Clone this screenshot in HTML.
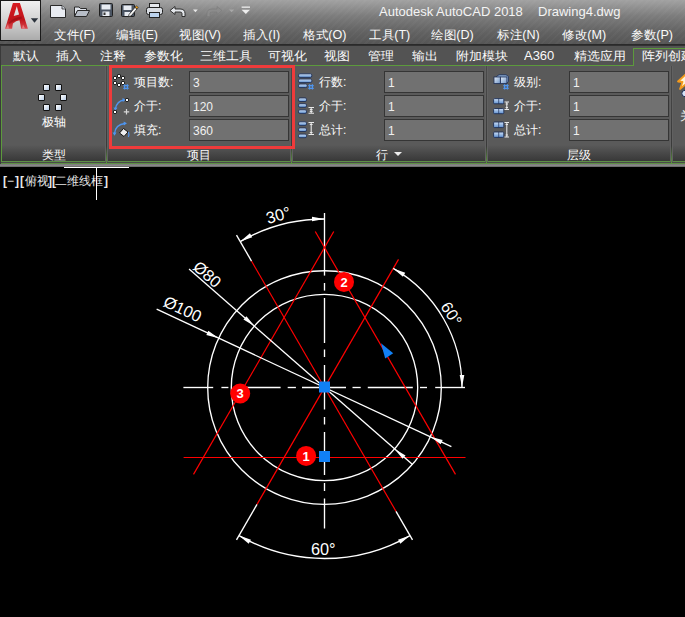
<!DOCTYPE html>
<html><head><meta charset="utf-8">
<style>
*{margin:0;padding:0;box-sizing:border-box}
html,body{width:685px;height:617px;overflow:hidden;background:#000}
body{position:relative;font-family:"Liberation Sans",sans-serif;color:#fafafa;font-size:12px}
.a{position:absolute;white-space:nowrap;line-height:1}
.mn{transform:scaleX(1.05);transform-origin:0 0}
.tb{transform:scaleX(1.08);transform-origin:0 0}
#title{position:absolute;left:0;top:0;width:685px;height:44px;
 background:repeating-linear-gradient(135deg,rgba(255,255,255,0.0) 0 3px,rgba(255,255,255,0.025) 3px 5px),linear-gradient(#a2a2a2 0px,#7c7c7c 16px,#626262 32px,#555555 44px);}
#abtn{position:absolute;left:0;top:0;width:41px;height:41px;border:1px solid #1a1a1a;background:linear-gradient(#f0f0f0,#d6d6d6 45%,#ababab)}
#sep1{position:absolute;left:0;top:44px;width:685px;height:2px;background:linear-gradient(#262626,#363636)}
#tabs{position:absolute;left:0;top:46px;width:685px;height:19px;background:#535353;border-left:1px solid #3a3a3a}
#ribbon{position:absolute;left:0;top:65px;width:685px;height:97px;background:#5b5b5b}
.panel{position:absolute;top:65px;height:98px;border-left:1px solid #6a6a6a;border-right:1px solid #6a6a6a;}
.lbar{position:absolute;top:82px;left:0;right:0;height:14px;background:linear-gradient(#5a5a5a,#3c3c3c)}
.sq{position:absolute;width:7px;height:7px;border:1px solid #111;border-radius:1px;background:linear-gradient(135deg,#fff,#b9cde6)}
.inp{position:absolute;width:100px;height:22px;background:#717171;border:1px solid #353535}
.inp span{position:absolute;left:3px;top:5px;font-size:12px;line-height:1;color:#f0f0f0}
.lab{position:absolute;font-size:12px;line-height:1;color:#fafafa;white-space:nowrap}
</style></head><body>
<div id="title"></div>
<div id="abtn"></div>
<svg class="a" style="left:0;top:0" width="44" height="44" viewBox="0 0 44 44">
<defs><linearGradient id="ag" x1="0" y1="0" x2="0" y2="1"><stop offset="0" stop-color="#d81c22"/><stop offset="0.65" stop-color="#c0141a"/><stop offset="1" stop-color="#d8484d"/></linearGradient></defs>
<path d="M12.9 3.1 H19.9 L27.9 28.8 H21.2 L19.5 20.2 Q16 20.6 12.9 23.4 L12.1 28.8 H5.1 Z M16.8 6.2 L13.7 16.1 L19.1 14.5 Z" fill="url(#ag)" fill-rule="evenodd"/>
<path d="M8.5 22.5 Q14 17.5 21.5 16.5 L22 18.5 Q15 19.5 9.5 24 Z" fill="#8e0c12" opacity="0.55"/>
<path d="M6 28.5 L8 24 L9 28.5 Z M22 28.5 L23 24.5 L25 28.5 Z" fill="#f4a0a3" opacity="0.6"/>
<path d="M30.8 18.2 L38.2 18.2 L34.5 22.8 Z" fill="#2c333d"/>
</svg>
<svg class="a" style="left:48px;top:2px" width="210" height="18" viewBox="48 2 210 18">
<!-- new -->
<path d="M50.5 5.5 H62 L65.5 9 V17.5 H50.5 Z" fill="#e9ecf2" stroke="#2a2a2a" stroke-width="1"/>
<path d="M62 5.5 V9 H65.5" fill="#cfd4dc" stroke="#2a2a2a" stroke-width="0.8"/>
<!-- open -->
<path d="M74.5 7 H79 L80.5 8.5 H86.5 V11 H77.5 L74.5 16.5 Z" fill="#dfe3ea" stroke="#2a2a2a" stroke-width="1"/>
<path d="M74.5 16.5 L77.5 10.5 H89.5 L86.5 16.5 Z" fill="#b8bec8" stroke="#2a2a2a" stroke-width="1"/>
<!-- save -->
<rect x="99.5" y="3.5" width="13" height="13" rx="1" fill="#4b5563" stroke="#1f1f1f"/>
<rect x="101.5" y="4.5" width="9" height="5" fill="#e8ecf2"/>
<rect x="102.5" y="11.5" width="7" height="4.5" fill="#e8ecf2"/>
<rect x="103.5" y="12.5" width="2" height="2.5" fill="#333"/>
<!-- save as -->
<rect x="121.5" y="4.5" width="13" height="12" rx="1" fill="#4b5563" stroke="#1f1f1f"/>
<rect x="123.5" y="5.5" width="8" height="4.5" fill="#e8ecf2"/>
<rect x="124.5" y="12" width="6" height="4" fill="#e8ecf2"/>
<path d="M129 14.5 L135 7.3 L137 9 L131 16 L128.5 16.8 Z" fill="#f4f4f4" stroke="#222" stroke-width="0.8"/><path d="M135 7.3 L136.3 5.8 L138.3 7.5 L137 9 Z" fill="#f2a31b" stroke="#222" stroke-width="0.6"/>
<!-- print -->
<rect x="149.5" y="3.5" width="10" height="5" fill="#e6e9ee" stroke="#222"/>
<rect x="146.5" y="7.5" width="16" height="7" rx="2" fill="#d9dde3" stroke="#222"/>
<rect x="149.5" y="12.5" width="10" height="5" fill="#bcd3ee" stroke="#222"/>
<!-- undo -->
<path d="M170 10.5 L175 6.5 V9 H180 Q185 9 185 13.5 V16.5 H182 V13.5 Q182 12 180 12 H175 V14.5 Z" fill="#e3e6ea" stroke="#222" stroke-width="0.9"/>
<path d="M193 9.6 H197.8 L195.4 12.3 Z" fill="#e8e8e8"/>
<!-- redo -->
<path d="M222 10.5 L217 6.5 V9 H212 Q207 9 207 13.5 V16.5 H210 V13.5 Q210 12 212 12 H217 V14.5 Z" fill="#8c8c8c" stroke="#7a7a7a" stroke-width="0.6"/>
<path d="M229 9.6 H234.3 L231.6 12.3 Z" fill="#a8a8a8"/>
<!-- customize -->
<rect x="241.6" y="6.5" width="8.4" height="1.3" fill="#eee"/>
<path d="M241.6 9.8 H250 L245.8 14 Z" fill="#eee"/>
</svg>
<div class="a" style="left:379px;top:5px;font-size:13px;color:#f4f4f4">Autodesk AutoCAD 2018</div>
<div class="a" style="left:538px;top:5px;font-size:13px;color:#f4f4f4">Drawing4.dwg</div>
<div class="a mn" style="left:54px;top:29px">文件(F)</div>
<div class="a mn" style="left:116px;top:29px">编辑(E)</div>
<div class="a mn" style="left:179px;top:29px">视图(V)</div>
<div class="a mn" style="left:243px;top:29px">插入(I)</div>
<div class="a mn" style="left:303px;top:29px">格式(O)</div>
<div class="a mn" style="left:369px;top:29px">工具(T)</div>
<div class="a mn" style="left:431px;top:29px">绘图(D)</div>
<div class="a mn" style="left:497px;top:29px">标注(N)</div>
<div class="a mn" style="left:562px;top:29px">修改(M)</div>
<div class="a mn" style="left:631px;top:29px">参数(P)</div>
<div id="sep1"></div>
<div id="tabs"></div>
<div class="a tb" style="left:13px;top:50px">默认</div>
<div class="a tb" style="left:56px;top:50px">插入</div>
<div class="a tb" style="left:100px;top:50px">注释</div>
<div class="a tb" style="left:144px;top:50px">参数化</div>
<div class="a tb" style="left:200px;top:50px">三维工具</div>
<div class="a tb" style="left:268px;top:50px">可视化</div>
<div class="a tb" style="left:324px;top:50px">视图</div>
<div class="a tb" style="left:368px;top:50px">管理</div>
<div class="a tb" style="left:412px;top:50px">输出</div>
<div class="a tb" style="left:456px;top:50px">附加模块</div>
<div class="a tb" style="left:524px;top:50px">A360</div>
<div class="a tb" style="left:574px;top:50px">精选应用</div>
<div id="ribbon"></div>
<div id="rib2" style="position:absolute;left:0;top:65px;width:685px;height:1px;background:#5c9a3c"></div>
<div style="position:absolute;left:633px;top:48px;width:70px;height:18px;background:#5a5a5a;border:1px solid #5c9a3c;border-bottom:none"></div>
<div class="a tb" style="left:642px;top:50px">阵列创建</div>
<div style="position:absolute;left:0;top:66px;width:685px;height:96px;background:#5a5a5a"></div>
<div style="position:absolute;left:0;top:145px;width:685px;height:16px;background:linear-gradient(#5a5a5a,#4c4c4c 40%,#383838)"></div>
<div style="position:absolute;left:0;top:161px;width:685px;height:1px;background:#5d8f45"></div>
<div style="position:absolute;left:0;top:162px;width:685px;height:1px;background:#4a4a4a"></div>
<div style="position:absolute;left:0;top:163px;width:685px;height:1px;background:#5d8f45"></div>
<div style="position:absolute;left:0;top:164px;width:685px;height:3px;background:linear-gradient(#7a7a7a,#8a8a8a 60%,#5a5a5a)"></div>
<!-- panel separators -->
<div style="position:absolute;left:0;top:65px;width:1px;height:99px;background:#3a3a3a"></div><div style="position:absolute;left:1px;top:65px;width:1px;height:97px;background:#5c9a3c"></div>
<div style="position:absolute;left:105px;top:66px;width:1px;height:96px;background:#616161"></div>
<div style="position:absolute;left:106px;top:66px;width:1px;height:98px;background:linear-gradient(#4a4a4a,#3a3a3a 80px,#5c9a3c 98px)"></div>
<div style="position:absolute;left:107px;top:66px;width:1px;height:96px;background:#616161"></div>
<div style="position:absolute;left:290px;top:66px;width:1px;height:96px;background:#616161"></div>
<div style="position:absolute;left:291px;top:66px;width:1px;height:98px;background:linear-gradient(#4a4a4a,#3a3a3a 80px,#5c9a3c 98px)"></div>
<div style="position:absolute;left:292px;top:66px;width:1px;height:96px;background:#616161"></div>
<div style="position:absolute;left:485px;top:66px;width:1px;height:96px;background:#616161"></div>
<div style="position:absolute;left:486px;top:66px;width:1px;height:98px;background:linear-gradient(#4a4a4a,#3a3a3a 80px,#5c9a3c 98px)"></div>
<div style="position:absolute;left:487px;top:66px;width:1px;height:96px;background:#616161"></div>
<div style="position:absolute;left:670px;top:66px;width:1px;height:96px;background:#616161"></div>
<div style="position:absolute;left:671px;top:66px;width:1px;height:98px;background:linear-gradient(#4a4a4a,#3a3a3a 80px,#5c9a3c 98px)"></div>
<div style="position:absolute;left:672px;top:66px;width:1px;height:96px;background:#616161"></div>
<!-- type panel -->
<div class="sq" style="left:43px;top:84px"></div><div class="sq" style="left:55px;top:84px"></div>
<div class="sq" style="left:38px;top:94px"></div><div class="sq" style="left:60px;top:94px"></div>
<div class="sq" style="left:43px;top:104px"></div><div class="sq" style="left:55px;top:104px"></div>
<div class="lab" style="left:42px;top:116px">极轴</div>
<div class="lab" style="left:42px;top:149px">类型</div>
<!-- items panel -->
<div class="lab" style="left:134px;top:76px">项目数:</div>
<div class="lab" style="left:134px;top:100px">介于:</div>
<div class="lab" style="left:134px;top:124px">填充:</div>
<div class="inp" style="left:189px;top:71px"><span>3</span></div>
<div class="inp" style="left:189px;top:95px"><span>120</span></div>
<div class="inp" style="left:189px;top:119px"><span>360</span></div>
<div class="lab" style="left:187px;top:149px">项目</div>
<!-- rows panel -->
<div class="lab" style="left:319px;top:76px">行数:</div>
<div class="lab" style="left:319px;top:100px">介于:</div>
<div class="lab" style="left:319px;top:124px">总计:</div>
<div class="inp" style="left:384px;top:71px"><span>1</span></div>
<div class="inp" style="left:384px;top:95px"><span>1</span></div>
<div class="inp" style="left:384px;top:119px"><span>1</span></div>
<div class="lab" style="left:376px;top:149px">行</div>
<svg class="a" style="left:394px;top:152px" width="8" height="5"><path d="M0 0H8L4 4Z" fill="#eee"/></svg>
<!-- levels panel -->
<div class="lab" style="left:514px;top:76px">级别:</div>
<div class="lab" style="left:514px;top:100px">介于:</div>
<div class="lab" style="left:514px;top:124px">总计:</div>
<div class="inp" style="left:569px;top:71px"><span>1</span></div>
<div class="inp" style="left:569px;top:95px"><span>1</span></div>
<div class="inp" style="left:569px;top:119px"><span>1</span></div>
<div class="lab" style="left:567px;top:149px">层级</div>
<svg id="ricons" class="a" style="left:0;top:0" width="685" height="170" viewBox="0 0 685 170">
<defs>
<linearGradient id="bar" x1="0" y1="0" x2="0" y2="1"><stop offset="0" stop-color="#cfe0f5"/><stop offset="1" stop-color="#5d8fd0"/></linearGradient>
<linearGradient id="cube" x1="0" y1="0" x2="1" y2="1"><stop offset="0" stop-color="#e5eef8"/><stop offset="1" stop-color="#6e94c6"/></linearGradient>
</defs>
<!-- item count icon -->
<g fill="#fff" stroke="#151515" stroke-width="1">
<rect x="117.5" y="74.5" width="3" height="3" rx="0.6"/>
<rect x="113.5" y="76.5" width="3" height="3" rx="0.6"/>
<rect x="121.5" y="76.5" width="3" height="3" rx="0.6"/>
<rect x="113.5" y="81.5" width="3" height="3" rx="0.6"/>
<rect x="121.5" y="81.5" width="3" height="3" rx="0.6"/>
<rect x="117.5" y="83.5" width="3" height="3" rx="0.6"/>
</g>
<g stroke="#4f95ee" stroke-width="1.2" fill="none">
<path d="M124.6 84.3V89.6M127.4 84.3V89.6M123.3 85.6H128.7M123.3 88.3H128.7"/>
<path d="M309.6 84.3V89.6M312.4 84.3V89.6M308.3 85.6H313.7M308.3 88.3H313.7"/>
<path d="M504.6 84.3V89.6M507.4 84.3V89.6M503.3 85.6H508.7M503.3 88.3H508.7"/>
</g>
<!-- spacing icon -->
<path d="M115.5 108.5 Q117 101 124 100" fill="none" stroke="#4f95ee" stroke-width="1.3"/>
<path d="M122.5 98 L125.8 99.8 L122.8 102 Z M113.5 107.5 L117.5 107.8 L115.2 110.8 Z" fill="#4f95ee"/>
<g fill="#fff" stroke="#151515" stroke-width="1"><rect x="125.5" y="98.5" width="3" height="3" rx="0.6"/><rect x="113.5" y="110.5" width="3" height="3" rx="0.6"/></g>
<path d="M126.5 109V114.5M123.8 111.8H129.2" stroke="#d8d8d8" stroke-width="1.2"/>
<!-- fill icon -->
<path d="M114.5 133.5 Q115.5 124.5 125 123.5" fill="none" stroke="#4f95ee" stroke-width="1.3"/>
<path d="M123.6 121.5 L127 123.3 L123.9 125.6 Z M112.5 132.5 L116.5 132.5 L114.5 135.8 Z" fill="#4f95ee"/>
<path d="M119.5 133 L123.5 128.5 L128 132 L124 136.5 Z" fill="#eee" stroke="#111" stroke-width="1"/>
<path d="M128.5 132 Q129.5 135 128.3 137" fill="none" stroke="#4f95ee" stroke-width="1.2"/>
<!-- rows icons -->
<g fill="url(#bar)" stroke="#1e2f56" stroke-width="0.9">
<rect x="298.5" y="73.8" width="13.3" height="3.6" rx="1.4"/>
<rect x="298.5" y="79" width="13.3" height="3.6" rx="1.4"/>
<rect x="298.5" y="84" width="8.7" height="3.6" rx="1.4"/>
<rect x="298.5" y="97.9" width="8" height="3.6" rx="1.4"/>
<rect x="298.5" y="103.7" width="8" height="3.6" rx="1.4"/>
<rect x="298.5" y="109.8" width="8" height="3.6" rx="1.4"/>
<rect x="298.5" y="121.8" width="8" height="3.6" rx="1.4"/>
<rect x="298.5" y="127.9" width="8" height="3.6" rx="1.4"/>
<rect x="298.5" y="134.1" width="8" height="3.6" rx="1.4"/>
</g>
<g stroke="#e8e8e8" stroke-width="1.1" fill="none">
<path d="M308.5 107.5H314M308.5 113.3H314M311.2 107.5V113.3M309.8 109.5H312.6M309.8 111.4H312.6"/>
<path d="M308.5 122.5H314M308.5 134.5H314M311.2 122.5V134.5M309.8 124.5H312.6M309.8 132.5H312.6"/>
</g>
<!-- levels icons -->
<g stroke="#1e2f56" stroke-width="0.8">
<path d="M496.5 76.5 L499 74.7 H506 L508.5 76.5 V81.5 L506 83.6 H496.5 Z" fill="#7f9cc4"/>
<rect x="494" y="77" width="6.3" height="6.6" fill="url(#cube)"/>
<rect x="500.6" y="77" width="6.3" height="6.6" fill="url(#cube)"/>
</g>
<g fill="url(#bar)" stroke="#1e2f56" stroke-width="0.9">
<rect x="493.6" y="98.6" width="10.2" height="5.2" rx="1"/>
<rect x="493.6" y="108.5" width="10.2" height="5.2" rx="1"/>
<rect x="493.6" y="122" width="10.2" height="5.6" rx="1"/>
<rect x="493.6" y="132" width="10.2" height="5.4" rx="1"/>
</g>
<g stroke="#1e2f56" stroke-width="0.7"><path d="M498.7 98.6V103.8M498.7 108.5V113.7M498.7 122V127.6M498.7 132V137.4"/></g>
<g stroke="#e8e8e8" stroke-width="1.1" fill="none">
<path d="M504.5 102H509M504.5 109.5H509M506.8 102V109.5M505.6 104H508M505.6 107.5H508"/>
<path d="M504.5 122.5H509M504.5 137H509M506.8 122.5V137M505.6 124.5H508M505.6 135H508"/>
</g>
<!-- close array icon -->
<path d="M686 74 L678 81.5 L682.5 82 L680 89 L686 84 Z" fill="#fff4d6" stroke="#f59a1b" stroke-width="1.8" stroke-linejoin="round"/>
<circle cx="685" cy="93.5" r="3.2" fill="#d5e4f7" stroke="#1e2f56" stroke-width="1"/>
</svg>
<div class="lab" style="left:680px;top:110px">关</div>
<!-- red highlight -->
<div style="position:absolute;left:109px;top:65px;width:186px;height:84px;border:3px solid #ef3b3b"></div>
<div id="canvas" style="position:absolute;left:0;top:167px;width:685px;height:450px;background:#000"></div>
<div class="a" style="left:3px;top:175px;font-size:12px;color:#e8e8e8;font-weight:bold">[</div>
<div class="a" style="left:7px;top:175px;font-size:12px;color:#e8e8e8">−</div>
<div class="a" style="left:15px;top:175px;font-size:12px;color:#e8e8e8;font-weight:bold">]</div>
<div class="a" style="left:20px;top:175px;font-size:12px;color:#e8e8e8;font-weight:bold">[</div>
<div class="a" style="left:25px;top:175px;font-size:12px;color:#e8e8e8">俯视</div>
<div class="a" style="left:48px;top:175px;font-size:12px;color:#e8e8e8;font-weight:bold">]</div>
<div class="a" style="left:52px;top:175px;font-size:12px;color:#e8e8e8;font-weight:bold">[</div>
<div class="a" style="left:55px;top:175px;font-size:12px;color:#e8e8e8">二维线框</div>
<div class="a" style="left:104px;top:175px;font-size:12px;color:#e8e8e8;font-weight:bold">]</div>
<svg id="drw" class="a" style="left:0;top:0" width="685" height="617" viewBox="0 0 685 617">
<circle cx="324.5" cy="387.5" r="116.8" fill="none" stroke="#ffffff" stroke-width="1.35"/>
<circle cx="324.5" cy="387.5" r="93.2" fill="none" stroke="#ffffff" stroke-width="1.35"/>
<line x1="324.50" y1="213.00" x2="324.50" y2="275.60" stroke="#ffffff" stroke-width="1.35"/>
<line x1="324.50" y1="283.00" x2="324.50" y2="290.60" stroke="#ffffff" stroke-width="1.35"/>
<line x1="324.50" y1="298.00" x2="324.50" y2="343.00" stroke="#ffffff" stroke-width="1.35"/>
<line x1="324.50" y1="349.50" x2="324.50" y2="357.00" stroke="#ffffff" stroke-width="1.35"/>
<line x1="324.50" y1="365.00" x2="324.50" y2="409.50" stroke="#ffffff" stroke-width="1.35"/>
<line x1="324.50" y1="417.00" x2="324.50" y2="424.50" stroke="#ffffff" stroke-width="1.35"/>
<line x1="324.50" y1="432.00" x2="324.50" y2="475.00" stroke="#ffffff" stroke-width="1.35"/>
<line x1="324.50" y1="483.00" x2="324.50" y2="491.00" stroke="#ffffff" stroke-width="1.35"/>
<line x1="324.50" y1="498.50" x2="324.50" y2="528.50" stroke="#ffffff" stroke-width="1.35"/>
<line x1="302.00" y1="387.50" x2="346.00" y2="387.50" stroke="#ffffff" stroke-width="1.35"/>
<line x1="352.50" y1="387.50" x2="360.70" y2="387.50" stroke="#ffffff" stroke-width="1.35"/>
<line x1="367.80" y1="387.50" x2="412.80" y2="387.50" stroke="#ffffff" stroke-width="1.35"/>
<line x1="420.00" y1="387.50" x2="427.00" y2="387.50" stroke="#ffffff" stroke-width="1.35"/>
<line x1="435.20" y1="387.50" x2="465.00" y2="387.50" stroke="#ffffff" stroke-width="1.35"/>
<line x1="287.70" y1="387.50" x2="295.90" y2="387.50" stroke="#ffffff" stroke-width="1.35"/>
<line x1="235.60" y1="387.50" x2="280.60" y2="387.50" stroke="#ffffff" stroke-width="1.35"/>
<line x1="221.40" y1="387.50" x2="228.40" y2="387.50" stroke="#ffffff" stroke-width="1.35"/>
<line x1="183.40" y1="387.50" x2="213.20" y2="387.50" stroke="#ffffff" stroke-width="1.35"/>
<line x1="333.75" y1="231.48" x2="193.51" y2="474.39" stroke="#ff0000" stroke-width="1.2"/>
<line x1="315.25" y1="231.48" x2="455.49" y2="474.39" stroke="#ff0000" stroke-width="1.2"/>
<line x1="183.60" y1="457.50" x2="465.50" y2="457.50" stroke="#ff0000" stroke-width="1.2"/>
<line x1="251.50" y1="261.06" x2="396.00" y2="511.34" stroke="#ff0000" stroke-width="1.2"/>
<line x1="398.50" y1="259.33" x2="257.00" y2="504.41" stroke="#ff0000" stroke-width="1.2"/>
<line x1="251.50" y1="261.06" x2="236.50" y2="235.08" stroke="#ffffff" stroke-width="1.35"/>
<line x1="257.00" y1="504.41" x2="236.50" y2="539.92" stroke="#ffffff" stroke-width="1.35"/>
<line x1="396.00" y1="511.34" x2="412.50" y2="539.92" stroke="#ffffff" stroke-width="1.35"/>
<path d="M240.25 241.57 A168.5 168.5 0 0 1 324.50 219.00" fill="none" stroke="#ffffff" stroke-width="1.3"/>
<path d="M240.25 241.57 L249.93 233.33 L252.23 237.32 Z" fill="#ffffff"/>
<path d="M324.50 219.00 L312.00 221.30 L312.00 216.70 Z" fill="#ffffff"/>
<path d="M393.25 268.42 A137.5 137.5 0 0 1 462.00 387.50" fill="none" stroke="#ffffff" stroke-width="1.3"/>
<path d="M393.25 268.42 L405.23 272.68 L402.93 276.66 Z" fill="#ffffff"/>
<path d="M462.00 387.50 L459.70 375.00 L464.30 375.00 Z" fill="#ffffff"/>
<path d="M410.00 535.59 A171 171 0 0 1 239.00 535.59" fill="none" stroke="#ffffff" stroke-width="1.3"/>
<path d="M410.00 535.59 L400.32 543.83 L398.02 539.85 Z" fill="#ffffff"/>
<path d="M239.00 535.59 L250.98 539.85 L248.68 543.83 Z" fill="#ffffff"/>
<line x1="156.65" y1="309.23" x2="451.38" y2="446.67" stroke="#ffffff" stroke-width="1.35"/>
<path d="M430.36 436.86 L442.66 440.06 L440.71 444.23 Z" fill="#ffffff"/>
<path d="M218.64 338.14 L206.34 334.94 L208.29 330.77 Z" fill="#ffffff"/>
<line x1="189.07" y1="268.94" x2="412.53" y2="464.57" stroke="#ffffff" stroke-width="1.35"/>
<path d="M394.63 448.89 L405.55 455.39 L402.52 458.85 Z" fill="#ffffff"/>
<path d="M254.37 326.11 L243.45 319.61 L246.48 316.15 Z" fill="#ffffff"/>
<rect x="319" y="381.5" width="11" height="11" fill="#1180f5"/>
<rect x="319" y="451" width="11" height="11" fill="#1180f5"/>
<path d="M381 343.3 L393.2 353.3 L385.2 358.6 Z" fill="#1180f5"/>
<circle cx="306.1" cy="455.9" r="10" fill="#ff0000"/>
<text x="306.1" y="460.7" text-anchor="middle" font-family="Liberation Sans" font-weight="bold" font-size="13" fill="#fff">1</text>
<circle cx="344" cy="281.9" r="10" fill="#ff0000"/>
<text x="344" y="286.7" text-anchor="middle" font-family="Liberation Sans" font-weight="bold" font-size="13" fill="#fff">2</text>
<circle cx="240.2" cy="393.5" r="10" fill="#ff0000"/>
<text x="240.2" y="398.3" text-anchor="middle" font-family="Liberation Sans" font-weight="bold" font-size="13" fill="#fff">3</text>
<text font-family="Liberation Sans" font-size="16.3" fill="#fff" transform="translate(268,224) rotate(-16)">30°</text>
<text font-family="Liberation Sans" font-size="16.3" fill="#fff" transform="translate(311,554.7)">60°</text>
<text font-family="Liberation Sans" font-size="16.3" fill="#fff" transform="translate(438.7,307.3) rotate(57) translate(0,-1.5)">60°</text>
<text font-family="Liberation Sans" font-size="16.3" fill="#fff" transform="translate(161.5,307) rotate(25) translate(0,-1.5)">Ø100</text>
<text font-family="Liberation Sans" font-size="16.3" fill="#fff" transform="translate(192,272.5) rotate(41.2) translate(-2.6,-3)">Ø80</text>
</svg>
<div style="position:absolute;left:64px;top:167px;width:65px;height:1px;background:#fff"></div>
<div style="position:absolute;left:96px;top:167px;width:1px;height:33px;background:#fff"></div>
</body></html>
